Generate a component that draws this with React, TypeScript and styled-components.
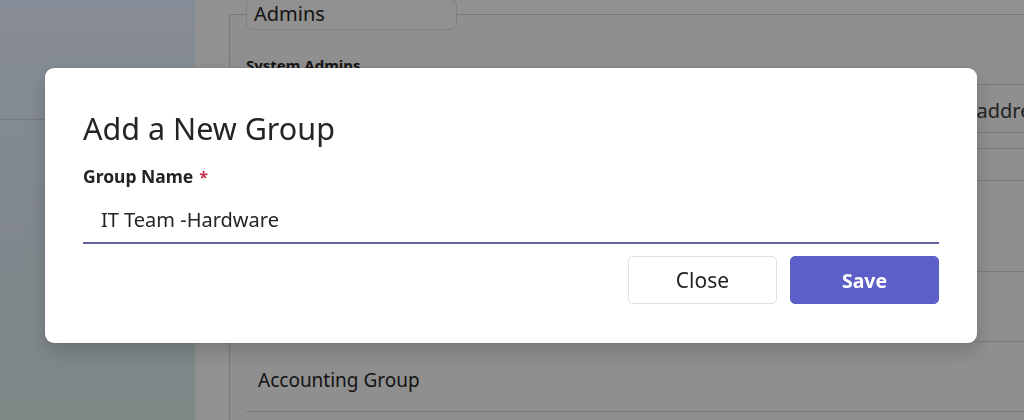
import React, { useState } from 'react';
import styled, { createGlobalStyle } from 'styled-components';

const GlobalStyle = createGlobalStyle`
    html, body {
        margin: 0;
        padding: 0;
        height: 100%;
    }
    body {
        font-family: 'Noto Sans', 'Open Sans', sans-serif;
        color: #242424;
        overflow: hidden;
    }
    * {
        box-sizing: border-box;
    }
`;

const Page = styled.div`
    display: flex;
    width: 1024px;
    height: 420px;
    overflow: hidden;
    background: #f0f0f0;
`;

const Sidebar = styled.aside`
    flex: 0 0 195px;
    display: flex;
    flex-direction: column;
    background: linear-gradient(180deg, #e0e9fc 0%, #d6e2ea 60%, #d2e1df 100%);
`;

const SidebarHead = styled.div`
    height: 120px;
    border-bottom: 1px solid #c4cad4;
`;

const Main = styled.main`
    flex: 1;
    min-width: 0;
    padding: 14px 0 0 34px;
    background: #f2f2f2;
`;

const Panel = styled.section`
    width: 900px;
    height: 100%;
    display: flex;
    flex-direction: column;
    padding: 0 0 0 16px;
    border-top: 1px solid #cbcbcb;
    border-left: 1px solid #cbcbcb;
    background: #eeeeee;
`;

const Tab = styled.div`
    width: 211px;
    height: 31px;
    margin-top: -16px;
    padding: 1px 7px 0;
    font-size: 20px;
    line-height: 26px;
    color: #242424;
    border: 1px solid #d6d6d6;
    border-radius: 6px;
    background: #f0f0f0;
`;

const SectionTitle = styled.h3`
    margin: 25px 0 0;
    font-size: 15px;
    font-weight: 700;
    line-height: 20px;
`;

const SearchRow = styled.div`
    display: flex;
    justify-content: flex-end;
    margin-top: 9px;
    border-top: 1px solid #cfcfcf;
    border-bottom: 1px solid #cfcfcf;
    height: 49px;
`;

const SearchInput = styled.input`
    width: 361px;
    height: 100%;
    padding: 4px 12px 0;
    border: none;
    background: transparent;
    font-family: inherit;
    font-size: 20px;
    color: #242424;
    outline: none;
    &::placeholder {
        color: #3a3a3a;
    }
`;

const TableHead = styled.div`
    height: 33px;
    margin-top: 15px;
    border-top: 1px solid #cfcfcf;
    border-bottom: 1px solid #cfcfcf;
`;

type RowProps = { $tall?: boolean };

const Row = styled.div<RowProps>`
    display: flex;
    align-items: center;
    height: ${(p) => (p.$tall ? 91 : 70)}px;
    padding: 6px 0 0 12px;
    font-size: 19px;
    color: #242424;
    border-bottom: 1px solid #cfcfcf;
`;

const Overlay = styled.div`
    position: fixed;
    inset: 0;
    display: flex;
    align-items: center;
    justify-content: center;
    padding: 0 2px 9px 0;
    background: rgba(0, 0, 0, 0.4);
`;

const Dialog = styled.div`
    width: 932px;
    height: 275px;
    padding: 40px 38px 39px;
    display: flex;
    flex-direction: column;
    background: #ffffff;
    border-radius: 9px;
    box-shadow: 0 8px 20px rgba(0, 0, 0, 0.18), 0 0 3px rgba(0, 0, 0, 0.1);
`;

const Title = styled.h2`
    margin: 0;
    font-size: 30.5px;
    font-weight: 400;
    line-height: 40px;
    color: #242424;
`;

const Label = styled.label`
    margin-top: 16px;
    font-size: 17.5px;
    font-weight: 700;
    line-height: 24px;
    color: #242424;
`;

const Required = styled.span`
    margin-left: 6px;
    color: #c4314b;
    font-size: 16px;
    font-weight: 700;
`;

const NameInput = styled.input`
    height: 48px;
    margin-top: 8px;
    padding: 0 18px;
    border: none;
    border-bottom: 2px solid #6264a7;
    background: #ffffff;
    font-family: inherit;
    font-size: 20px;
    color: #242424;
    outline: none;
`;

const Actions = styled.div`
    display: flex;
    justify-content: flex-end;
    gap: 13px;
    margin-top: 12px;
`;

type ButtonProps = { $primary?: boolean };

const Button = styled.button<ButtonProps>`
    width: 149px;
    height: 48px;
    border-radius: 5px;
    font-family: inherit;
    font-size: ${(p) => (p.$primary ? 19.5 : 21)}px;
    font-weight: ${(p) => (p.$primary ? 700 : 400)};
    cursor: pointer;
    color: ${(p) => (p.$primary ? '#ffffff' : '#242424')};
    background: ${(p) => (p.$primary ? '#5b5fc7' : '#ffffff')};
    border: 1px solid ${(p) => (p.$primary ? '#5b5fc7' : '#e0e0e0')};
`;

export default function App() {
    const [name, setName] = useState('IT Team -Hardware');

    return (
        <>
            <GlobalStyle />
            <Page>
                <Sidebar>
                    <SidebarHead />
                </Sidebar>
                <Main>
                    <Panel>
                        <Tab>Admins</Tab>
                        <SectionTitle>System Admins</SectionTitle>
                        <SearchRow>
                            <SearchInput placeholder="Enter name or email address" />
                        </SearchRow>
                        <TableHead />
                        <Row $tall />
                        <Row>IT Team</Row>
                        <Row>Accounting Group</Row>
                    </Panel>
                </Main>
            </Page>
            <Overlay>
                <Dialog>
                    <Title>Add a New Group</Title>
                    <Label htmlFor="group-name">
                        Group Name<Required>*</Required>
                    </Label>
                    <NameInput
                        id="group-name"
                        value={name}
                        onChange={(e) => setName(e.target.value)}
                    />
                    <Actions>
                        <Button>Close</Button>
                        <Button $primary>Save</Button>
                    </Actions>
                </Dialog>
            </Overlay>
        </>
    );
}
